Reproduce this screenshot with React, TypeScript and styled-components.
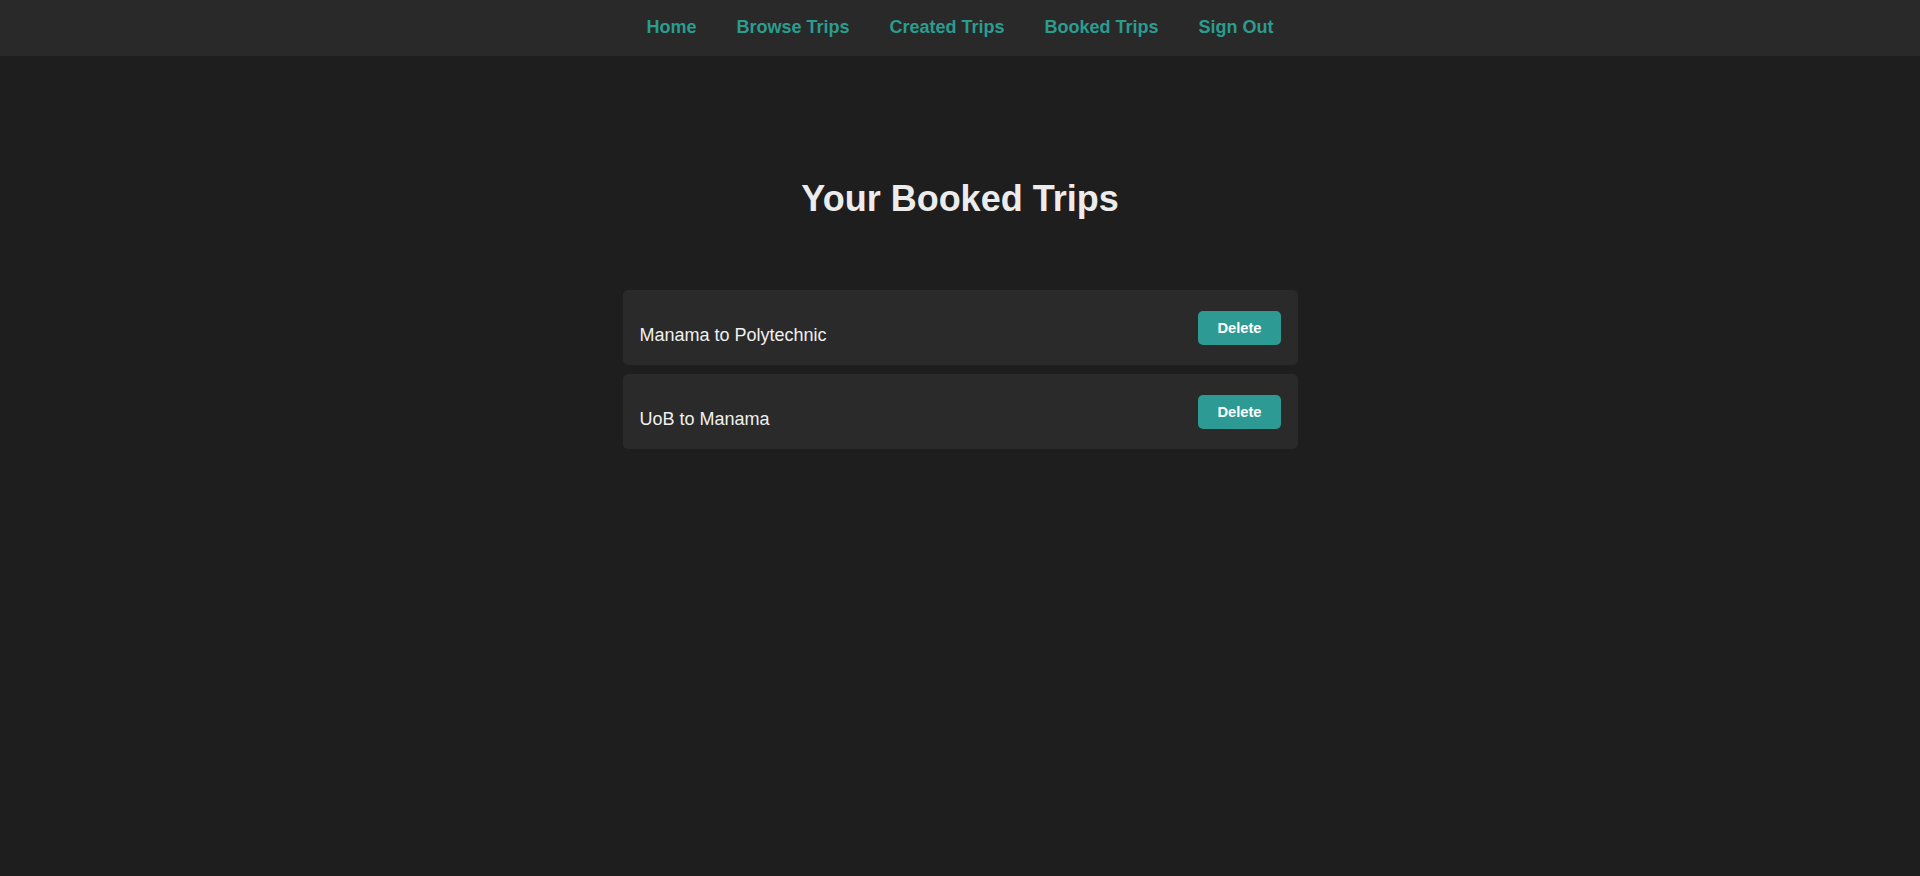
import React from "react";
import styled, { createGlobalStyle } from "styled-components";

const GlobalStyle = createGlobalStyle`
  html, body {
    margin: 0;
    padding: 0;
    background: #1e1e1e;
    font-family: "Liberation Sans", Arial, sans-serif;
    color: #eeeeee;
  }
  * { box-sizing: border-box; }
`;

const Page = styled.div`
  min-height: 876px;
  background: #1e1e1e;
`;

const NavBar = styled.nav`
  display: flex;
  justify-content: center;
  align-items: flex-start;
  gap: 40px;
  height: 56px;
  padding-top: 17px;
  background: #292929;
`;

const NavLink = styled.a`
  color: #2a9d8f;
  font-size: 18px;
  font-weight: 700;
  text-decoration: none;
  cursor: pointer;
`;

const Main = styled.main`
  display: flex;
  flex-direction: column;
  align-items: center;
`;

const Title = styled.h2`
  margin: 122px 0 70px;
  font-size: 36px;
  font-weight: 700;
  color: #ececec;
`;

const TripList = styled.div`
  width: 675px;
  display: flex;
  flex-direction: column;
  gap: 9px;
`;

const TripCard = styled.div`
  display: flex;
  justify-content: space-between;
  align-items: center;
  height: 75px;
  padding: 0 17px;
  background: #2a2a2a;
  border-radius: 5px;
`;

const TripInfo = styled.div`
  padding-top: 16px;
`;

const TripName = styled.span`
  font-size: 18px;
  color: #f0f0f0;
`;

const DeleteButton = styled.button`
  height: 34px;
  padding: 0 19px;
  border: none;
  border-radius: 5px;
  background: #2d9b93;
  color: #ffffff;
  font-family: "Liberation Sans", Arial, sans-serif;
  font-size: 14.7px;
  font-weight: 700;
  cursor: pointer;
`;

const links = ["Home", "Browse Trips", "Created Trips", "Booked Trips", "Sign Out"];
const trips = ["Manama to Polytechnic", "UoB to Manama"];

export default function App() {
  return (
    <Page>
      <GlobalStyle />
      <NavBar>
        {links.map((l) => (
          <NavLink key={l}>{l}</NavLink>
        ))}
      </NavBar>
      <Main>
        <Title>Your Booked Trips</Title>
        <TripList>
          {trips.map((t) => (
            <TripCard key={t}>
              <TripInfo>
                <TripName>{t}</TripName>
              </TripInfo>
              <DeleteButton>Delete</DeleteButton>
            </TripCard>
          ))}
        </TripList>
      </Main>
    </Page>
  );
}
